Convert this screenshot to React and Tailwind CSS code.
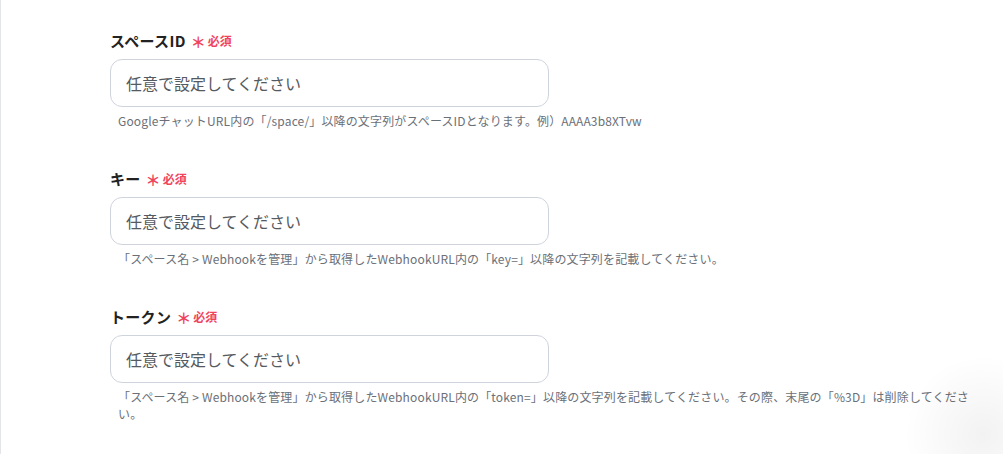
import React from 'react';

const fields = [
  {
    label: 'スペースID',
    help: 'GoogleチャットURL内の「/space/」以降の文字列がスペースIDとなります。例）AAAA3b8XTvw',
  },
  {
    label: 'キー',
    help: '「スペース名 > Webhookを管理」から取得したWebhookURL内の「key=」以降の文字列を記載してください。',
  },
  {
    label: 'トークン',
    help: '「スペース名 > Webhookを管理」から取得したWebhookURL内の「token=」以降の文字列を記載してください。その際、末尾の「%3D」は削除してください。',
  },
];

const Field = ({ label, help }) => (
  <div className="mb-[39px]">
    <div className="flex items-center gap-[5px] h-[22px] mb-[7px]">
      <span className="text-[15px] font-bold text-[#222222] tracking-[0.3px]">{label}</span>
      <span className="flex items-center text-[12px] font-bold text-[#f0445c]">
        <span className="text-[15px] leading-none mr-[2px]">＊</span>必須
      </span>
    </div>
    <div className="w-[439px] h-[48px] rounded-xl border border-[#cfd4dc] bg-white flex items-center px-[15px]">
      <span className="text-[16px] text-[#555a60]">任意で設定してください</span>
    </div>
    <p className="mt-[5px] pl-[8px] w-[873px] text-[12px] leading-[17px] tracking-[0.15px] text-[#6b7078]">{help}</p>
  </div>
);

export default function App() {
  return (
    <div
      className="relative w-[1003px] h-[454px] overflow-hidden bg-white border-l border-[#e3e5e8]"
      style={{ fontFamily: '"Noto Sans CJK JP", "Noto Sans", sans-serif' }}
    >
      <div className="pl-[109px] pt-[30px]">
        {fields.map((f) => (
          <Field key={f.label} {...f} />
        ))}
      </div>
      {/* soft corner shadow */}
      <div className="absolute right-[-60px] bottom-[-60px] w-[160px] h-[160px] rounded-full bg-[radial-gradient(circle,rgba(0,0,0,0.05),rgba(0,0,0,0)_70%)]" />
    </div>
  );
}
